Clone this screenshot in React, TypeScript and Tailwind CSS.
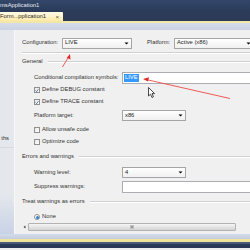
import React from "react";

const Arrow = () => (
  <svg width="5" height="3" viewBox="0 0 5 3" className="shrink-0">
    <path d="M0.5 0.5 H4.5 L2.5 2.5 Z" fill="#000" />
  </svg>
);

function Select({ text, w }: { text: string; w: string }) {
  return (
    <div className={`${w} h-[11px] border border-[#a5a5a5] bg-gradient-to-b from-[#ffffff] to-[#f0f0f0] flex items-center pl-[2px] pr-[2px] justify-between`}>
      <span className="text-[#222]">{text}</span>
      <Arrow />
    </div>
  );
}

function Check({ checked }: { checked?: boolean }) {
  return (
    <div className="w-[6px] h-[6px] border border-[#8e8f8f] bg-gradient-to-br from-[#e8e8e8] to-[#ffffff] flex items-center justify-center shrink-0">
      {checked && (
        <svg width="5" height="5" viewBox="0 0 5 5">
          <path d="M0.7 2.6 L2 3.9 L4.3 0.8" stroke="#3a5a8c" strokeWidth="1" fill="none" />
        </svg>
      )}
    </div>
  );
}

function Header({ text }: { text: string }) {
  return (
    <div className="flex items-center gap-[5px]">
      <span className="text-[#333] whitespace-nowrap">{text}</span>
      <div className="flex-1 border-t border-[#d0d0d0] border-b border-b-white h-0" />
    </div>
  );
}

export default function App() {
  return (
    <div
      className="w-[250px] h-[250px] overflow-hidden relative bg-[#f0f0f0] text-[5.8px] leading-none"
      style={{ fontFamily: '"Liberation Sans", Arial, sans-serif' }}
    >
      {/* title bar */}
      <div className="h-[12px] bg-gradient-to-b from-[#34476a] to-[#2a3a58] flex items-center">
        <span className="text-[#e6e9ef] whitespace-nowrap">msApplication1</span>
      </div>
      {/* tab strip */}
      <div className="h-[9px] bg-[#2b3b58] flex">
        <div className="w-[63px] h-full bg-gradient-to-b from-[#fffbe8] to-[#fde9a6] rounded-tr-[1px] flex items-center justify-between pr-[4px]">
          <span className="text-[#1e1e1e] whitespace-nowrap">Form...pplication1</span>
          <span className="text-[#555] text-[6px]">×</span>
        </div>
      </div>
      <div className="h-[2px] bg-[#f3e7a6]" />
      <div className="h-[7px] bg-gradient-to-b from-[#d6dcea] to-[#c9d2e4]" />

      {/* body */}
      <div className="flex h-[204px]">
        {/* sidebar */}
        <div className="w-[15px] shrink-0 bg-[#e4e7ec] border-r border-[#f8f8f8] relative flex flex-col">
          <div className="h-[106px]" />
          <div className="flex justify-end pr-[5px] overflow-hidden">
            <span className="text-[#333] whitespace-nowrap">ths</span>
          </div>
          <div className="mt-[5px] border-t border-[#d6d9df]" />
          <div className="flex-1" />
          <div className="h-[40px] bg-gradient-to-b from-[#e4e7ec] to-[#c8d3e6] rounded-tr-[30px]" />
        </div>

        {/* main */}
        <div className="flex-1 flex flex-col">
          <div className="h-[193px] overflow-hidden pl-[7px] flex flex-col">
            {/* configuration row */}
            <div className="mt-[8px] h-[10px] flex items-center">
              <span className="w-[40px] text-[#333]">Configuration:</span>
              <Select text="LIVE" w="w-[70px]" />
              <span className="ml-[15px] w-[27px] text-[#333]">Platform:</span>
              <Select text="Active (x86)" w="w-[80px]" />
            </div>
            <div className="h-[10px] flex items-center">
              <div className="flex-1 border-t border-[#d0d0d0] border-b border-b-white" />
            </div>
            <div className="h-[8px] flex items-center">
              <div className="flex-1"><Header text="General" /></div>
            </div>
            {/* inner */}
            <div className="pl-[12px] flex flex-col">
              <div className="mt-[6px] h-[12px] flex items-center">
                <span className="w-[88px] text-[#333] whitespace-nowrap">Conditional compilation symbols:</span>
                <div className="flex-1 h-[12px] border border-[#abadb3] bg-white flex items-center pl-[1px]">
                  <span className="bg-[#3399ff] text-white px-[1px] h-[8px] flex items-center">LIVE</span>
                </div>
              </div>
              <div className="h-[12px] flex items-center gap-[2px]">
                <Check checked />
                <span className="text-[#333]">Define DEBUG constant</span>
              </div>
              <div className="h-[12px] flex items-center gap-[2px]">
                <Check checked />
                <span className="text-[#333]">Define TRACE constant</span>
              </div>
              <div className="h-[15px] flex items-center">
                <span className="w-[88px] text-[#333]">Platform target:</span>
                <Select text="x86" w="w-[64px]" />
              </div>
              <div className="mt-[1px] h-[12px] flex items-center gap-[2px]">
                <Check />
                <span className="text-[#333]">Allow unsafe code</span>
              </div>
              <div className="h-[12px] flex items-center gap-[2px]">
                <Check />
                <span className="text-[#333]">Optimize code</span>
              </div>
            </div>
            <div className="mt-[3px] h-[12px] flex items-center">
              <div className="flex-1"><Header text="Errors and warnings" /></div>
            </div>
            <div className="pl-[12px] flex flex-col">
              <div className="mt-[3px] h-[13px] flex items-center">
                <span className="w-[88px] text-[#333]">Warning level:</span>
                <Select text="4" w="w-[64px]" />
              </div>
              <div className="mt-[2px] h-[12px] flex items-center">
                <span className="w-[88px] text-[#333]">Suppress warnings:</span>
                <div className="flex-1 h-[12px] border border-[#abadb3] bg-white" />
              </div>
            </div>
            <div className="mt-[3px] h-[12px] flex items-center">
              <div className="flex-1"><Header text="Treat warnings as errors" /></div>
            </div>
            <div className="pl-[12px] mt-[3px] h-[12px] flex items-center gap-[2px]">
              <div className="w-[6px] h-[6px] rounded-full border border-[#8e8f8f] bg-white flex items-center justify-center">
                <div className="w-[3px] h-[3px] rounded-full bg-[#2a7fd4]" />
              </div>
              <span className="text-[#333]">None</span>
            </div>
          </div>
          {/* horizontal scrollbar */}
          <div className="h-[8px] ml-[7px] w-[214px] flex items-center">
            <svg width="6" height="6" viewBox="0 0 6 6" className="shrink-0">
              <path d="M1.5 3 L3.5 1.5 V4.5 Z" fill="#444" />
            </svg>
            <div className="flex-1 h-[8px] border border-[#b2b2b2] rounded-[1px] bg-gradient-to-b from-[#f6f6f6] to-[#d4d4d4] flex items-center justify-center">
              <div className="w-[4px] h-[4px] bg-[#9a9a9a] border border-[#c0c0c0]" />
            </div>
          </div>
          <div className="flex-1" />
        </div>
      </div>

      {/* bottom bands */}
      <div className="h-[5px] bg-gradient-to-b from-[#d4dbe8] to-[#c4cde0]" />
      <div className="h-[3px] bg-[#efe49a]" />
      <div className="h-[2px] bg-[#4a5a78]" />
      <div className="h-[4px] bg-[#2a3a56]" />

      {/* annotations */}
      <svg className="absolute left-0 top-0 pointer-events-none" width="250" height="250" viewBox="0 0 250 250">
        <line x1="230" y1="98.5" x2="146" y2="79.5" stroke="#ec4a44" strokeWidth="0.9" />
        <path d="M143 79 L149 77.2 L148 81.6 Z" fill="#e02a24" />
        <line x1="62.5" y1="67" x2="68.5" y2="57" stroke="#ec4a44" strokeWidth="0.9" />
        <path d="M70 54 L70.5 59.5 L66.8 57.8 Z" fill="#e02a24" />
        {/* cursor */}
        <path d="M148.5 87.5 L148.5 96 L150.5 94.2 L152 97.5 L153.4 96.8 L152 93.6 L154.6 93.6 Z" fill="#fff" stroke="#000" strokeWidth="0.7" strokeLinejoin="round" />
      </svg>
    </div>
  );
}
